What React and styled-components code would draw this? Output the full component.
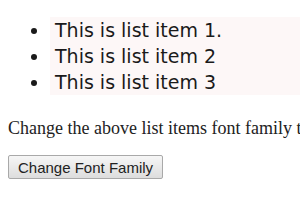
import styled, { createGlobalStyle } from "styled-components";

const GlobalStyle = createGlobalStyle`
  html, body {
    margin: 0;
    padding: 0;
    background: #ffffff;
    overflow: hidden;
  }
  body {
    padding: 8px;
    font-family: "Liberation Serif", "Times New Roman", serif;
    font-size: 18px;
    color: #111;
  }
`;

const List = styled.ul`
  margin: 9px -8px 0 0;
  padding-left: 42px;
  list-style: disc;
  font-family: "Comic Sans MS", "DejaVu Sans", sans-serif;
  font-size: 19px;
  color: #1a1a1a;
`;

const Item = styled.li`
  background: #fdf7f7;
  line-height: 26px;
  padding-left: 5px;
`;

const Note = styled.p`
  margin: 23px 0 0;
  white-space: nowrap;
  line-height: 20px;
  color: #222;
`;

const Button = styled.button`
  display: block;
  margin-top: 17px;
  height: 24px;
  padding: 0 9px;
  font-family: "Liberation Sans", Arial, sans-serif;
  font-size: 15px;
  color: #222;
  background: linear-gradient(#f6f6f6, #dddddd);
  border: 1px solid #a9a9a9;
  border-radius: 2px;
`;

export default function App() {
  return (
    <>
      <GlobalStyle />
      <List>
        <Item>This is list item 1.</Item>
        <Item>This is list item 2</Item>
        <Item>This is list item 3</Item>
      </List>
      <Note>Change the above list items font family to</Note>
      <Button>Change Font Family</Button>
    </>
  );
}
